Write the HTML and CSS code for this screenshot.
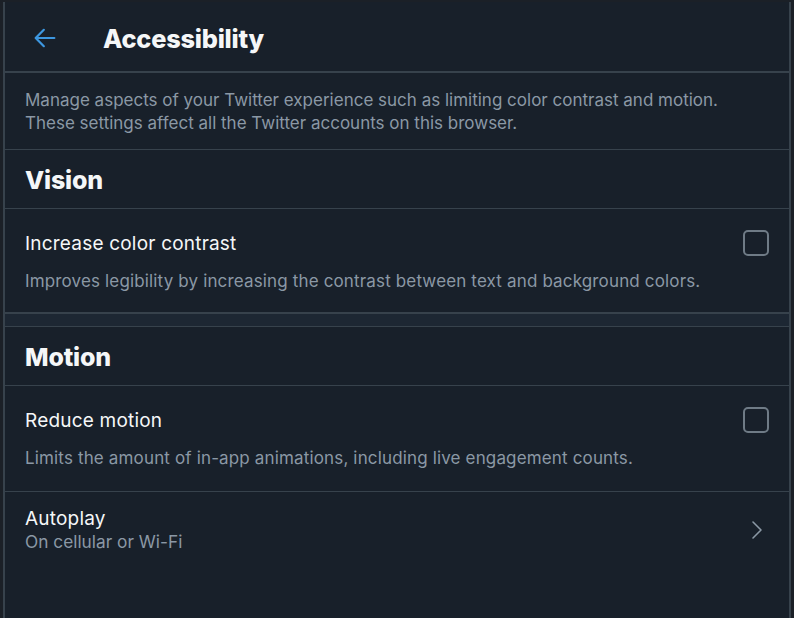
FILE: index.html
```html
<!DOCTYPE html>
<html lang="en">
<head>
  <meta charset="UTF-8" />
  <title>Accessibility</title>
  <link rel="stylesheet" href="styles.css">
</head>
<body>
  <main class="panel">
    <header class="topbar">
      <button class="back" aria-label="Back">
        <svg viewBox="0 0 24 24" width="28" height="28"><path d="M20 12H5M11 5l-7 7 7 7" fill="none" stroke="currentColor" stroke-width="1.9" stroke-linecap="round" stroke-linejoin="round"/></svg>
      </button>
      <h1>Accessibility</h1>
    </header>

    <p class="intro">Manage aspects of your Twitter experience such as limiting color contrast and motion.<br>These settings affect all the Twitter accounts on this browser.</p>

    <h2 class="section-title">Vision</h2>
    <div class="option">
      <div class="option-head">
        <span class="option-label">Increase color contrast</span>
        <span class="checkbox"></span>
      </div>
      <p class="option-desc">Improves legibility by increasing the contrast between text and background colors.</p>
    </div>

    <div class="spacer"></div>

    <h2 class="section-title">Motion</h2>
    <div class="option">
      <div class="option-head">
        <span class="option-label">Reduce motion</span>
        <span class="checkbox"></span>
      </div>
      <p class="option-desc">Limits the amount of in-app animations, including live engagement counts.</p>
    </div>

    <div class="link-row">
      <div>
        <div class="option-label">Autoplay</div>
        <div class="link-sub">On cellular or Wi-Fi</div>
      </div>
      <svg class="chevron" viewBox="0 0 12 20" width="12" height="20"><path d="M2 2l8 8-8 8" fill="none" stroke="currentColor" stroke-width="1.6" stroke-linecap="round" stroke-linejoin="round"/></svg>
    </div>
  </main>
</body>
</html>
```

FILE: styles.css
```css
html, body {
  height: 100%;
}

body {
  margin: 0;
  padding: 2px 3px 0 3px;
  box-sizing: border-box;
  background: #1b2027;
  font-family: Inter, "Liberation Sans", sans-serif;
  color: #f5f7f8;
}

.panel {
  min-height: 100%;
  background: #18202a;
  border-left: 2px solid #37424c;
  border-right: 2px solid #37424c;
  box-sizing: border-box;
}

.topbar {
  display: flex;
  align-items: center;
  height: 71px;
  border-bottom: 2px solid #37424c;
  padding-left: 26px;
  padding-top: 4px;
  box-sizing: border-box;
}

.back {
  background: none;
  border: none;
  padding: 0;
  color: #3d97e0;
  display: flex;
  margin-right: 44px;
  margin-top: -2px;
}

h1 {
  margin: 0;
  font-size: 25.3px;
  font-weight: 800;
  letter-spacing: -0.2px;
}

.intro {
  margin: 0;
  padding: 16px 20px 14px 20px;
  font-size: 17px;
  line-height: 23px;
  color: #8b98a5;
  border-bottom: 1px solid #37424c;
}

.section-title {
  margin: 0;
  height: 59px;
  display: flex;
  align-items: center;
  padding: 2px 20px 0 20px;
  box-sizing: border-box;
  font-size: 25px;
  font-weight: 800;
  letter-spacing: -0.2px;
  border-bottom: 1px solid #37424c;
}

.option {
  padding: 22px 20px 20px 20px;
}

.option-head {
  display: flex;
  align-items: center;
  justify-content: space-between;
  height: 24px;
}

.option-label {
  font-size: 19px;
  line-height: 24px;
  letter-spacing: 0.2px;
  padding-top: 1px;
}

.checkbox {
  width: 22px;
  height: 22px;
  border: 2px solid #6f7b86;
  border-radius: 5px;
}

.option-desc {
  margin: 14px 0 0 0;
  padding-top: 1px;
  font-size: 17px;
  line-height: 22px;
  letter-spacing: 0.15px;
  color: #8b98a5;
}

.spacer {
  height: 12px;
  background: #1d2733;
  border-top: 2px solid #37424c;
  border-bottom: 1px solid #37424c;
}

.option + .link-row {
  margin-top: 2px;
  border-top: 1px solid #37424c;
}

.link-row {
  display: flex;
  align-items: center;
  justify-content: space-between;
  padding: 15px 26px 12px 20px;
}

.link-row .option-label {
  padding-top: 0;
}

.link-sub {
  font-size: 17.3px;
  line-height: 22px;
  color: #8b98a5;
}

.chevron {
  color: #8b98a5;
}
```
